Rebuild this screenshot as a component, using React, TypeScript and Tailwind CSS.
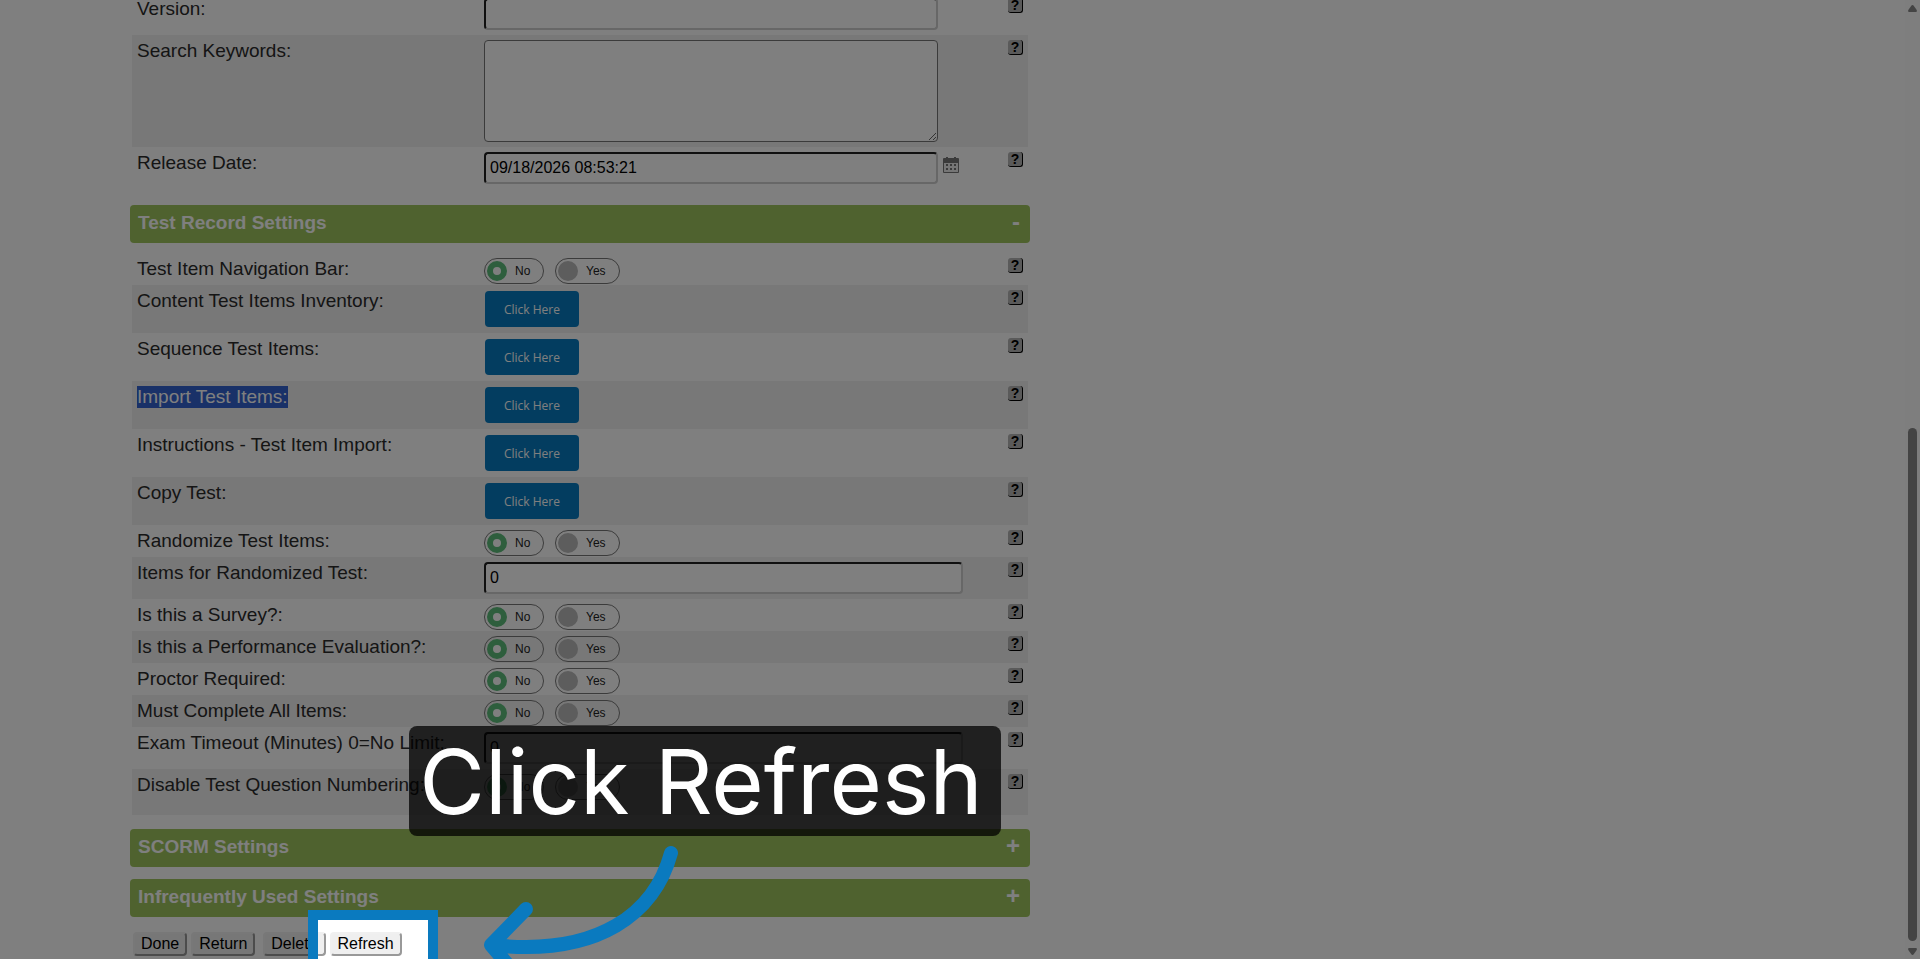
import type { ReactNode } from 'react';

const sans = "font-['Liberation_Sans',Arial,sans-serif]";

function Help({ topic }: { topic: string }) {
  return (
    <button
      type="button"
      aria-label={'Help: ' + topic}
      className="ml-auto flex h-[15px] w-[15px] shrink-0 items-center justify-center rounded-[3px] border-r border-b border-black bg-[#b4b4b4] text-sm leading-none font-bold text-black"
    >
      ?
    </button>
  );
}

type RowProps = {
  label: string;
  htmlFor?: string;
  striped?: boolean;
  selected?: boolean;
  tall?: boolean;
  children: ReactNode;
};

function Row({ label, htmlFor, striped, selected, tall, children }: RowProps) {
  return (
    <div className={'flex items-start px-[5px] pt-[5px] ' + (striped ? 'bg-[#f0f0f0] ' : '') + (tall ? 'pb-[14px]' : '')}>
      <div className="w-[347px] shrink-0 text-[19px] leading-[22px] text-[#2b2b2b]">
        <label htmlFor={htmlFor} className={selected ? 'inline-block bg-[#3263d0] text-white' : ''}>
          {label}
        </label>
      </div>
      {children}
      <Help topic={label} />
    </div>
  );
}

const field =
  'mb-[5px] block h-8 rounded-[4px] border-2 border-t-[#202020] border-l-[#202020] border-r-[#cfcfcf] border-b-[#cfcfcf] bg-white px-1 text-base text-black';

function Toggle({ name }: { name: string }) {
  return (
    <div className="mb-px flex gap-[11px]" role="radiogroup" aria-label={name}>
      <label className="flex h-[26px] w-[60px] items-center gap-2 rounded-full border border-[#777] pl-[2px] text-xs text-[#222]">
        <input
          type="radio"
          name={name}
          defaultChecked
          className="h-5 w-5 appearance-none rounded-full border-[6px] border-[#5cbc7a] bg-white"
        />
        No
      </label>
      <label className="flex h-[26px] w-[65px] items-center gap-2 rounded-full border border-[#777] pl-[2px] text-xs text-[#222]">
        <input type="radio" name={name} className="h-5 w-5 appearance-none rounded-full bg-[#bababa]" />
        Yes
      </label>
    </div>
  );
}

function ClickHere() {
  return (
    <button
      type="button"
      className="mt-px mb-[6px] ml-px h-9 w-[94px] rounded-[4px] bg-[#067ac0] pt-[2px] font-['Open_Sans',sans-serif] text-xs text-white"
    >
      Click Here
    </button>
  );
}

function SectionBar({ title, sign }: { title: string; sign: string }) {
  return (
    <button
      type="button"
      className="flex h-[38px] w-full items-center justify-between rounded-[4px] bg-[#9ec55e] pr-[10px] pb-[2px] pl-2 text-left text-[19px] font-bold text-white"
    >
      <span>{title}</span>
      <span className="pb-[2px] text-2xl leading-none">{sign}</span>
    </button>
  );
}

function ActionButton({ children }: { children: ReactNode }) {
  return (
    <button
      type="button"
      className="h-6 rounded-[4px] border-2 border-t-[#f0f0f0] border-l-[#f0f0f0] border-r-[#999] border-b-[#999] bg-[#efefef] px-[6px] text-base leading-5 text-black"
    >
      {children}
    </button>
  );
}

function CalendarIcon() {
  return (
    <svg width="16" height="16" viewBox="0 0 16 16" className="mt-[5px] ml-[5px] shrink-0" aria-label="Pick a date">
      <path fill="#777" d="M1 1h14a1 1 0 0 1 1 1v13a1 1 0 0 1-1 1H1a1 1 0 0 1-1-1V2a1 1 0 0 1 1-1z" />
      <path fill="#777" d="M3 0h2v3H3zM11 0h2v3h-2z" />
      <path fill="#ececec" d="M1 6h14v9H1z" />
      <path fill="#777" d="M3 7h2v2H3zM7 7h2v2H7zM11 7h2v2h-2zM3 11h2v2H3zM7 11h2v2H7zM11 11h2v2h-2z" />
    </svg>
  );
}

function ScrollBar() {
  return (
    <div className="flex w-[15px] shrink-0 flex-col items-center bg-[#fcfcfc] pt-[5px] pb-1" aria-hidden="true">
      <svg width="9" height="7" viewBox="0 0 9 7">
        <path fill="#888" d="M4.500 0q.7 0 1.200.7L8.700 5q.6 2-.7 2H1Q-.3 7 .3 5L3.300.7Q3.800 0 4.500 0z" />
      </svg>
      <div className="flex-1" />
      <div className="h-[54%] w-[9px] rounded-full bg-[#888]" />
      <svg width="9" height="7" viewBox="0 0 9 7" className="mt-[7px]">
        <path fill="#888" d="M4.500 7q.7 0 1.200-.7L8.700 2q.6-2-.7-2H1Q-.3 0 .3 2l3 4.300q.5.7 1.200.7z" />
      </svg>
    </div>
  );
}

export default function App() {
  return (
    <div className={'relative flex h-screen overflow-hidden bg-white ' + sans}>
      <main className="min-w-0 flex-1">
        <form className="-mt-[7px] ml-[130px] w-[900px]">
          <section className="px-[2px] pb-4">
            <Row label="Version:" htmlFor="version">
              <input id="version" type="text" className={field + ' w-[454px]'} />
            </Row>
            <Row label="Search Keywords:" htmlFor="keywords" striped>
              <textarea id="keywords" className="mb-[5px] block h-[102px] w-[454px] rounded-[4px] border border-[#777] bg-white" />
            </Row>
            <Row label="Release Date:" htmlFor="release">
              <input id="release" type="text" defaultValue="09/18/2026 08:53:21" className={field + ' w-[454px]'} />
              <CalendarIcon />
            </Row>
          </section>

          <SectionBar title="Test Record Settings" sign="-" />
          <section className="px-[2px] pt-[10px] pb-[14px]">
            <Row label="Test Item Navigation Bar:">
              <Toggle name="Test Item Navigation Bar" />
            </Row>
            <Row label="Content Test Items Inventory:" striped>
              <ClickHere />
            </Row>
            <Row label="Sequence Test Items:">
              <ClickHere />
            </Row>
            <Row label="Import Test Items:" striped selected>
              <ClickHere />
            </Row>
            <Row label="Instructions - Test Item Import:">
              <ClickHere />
            </Row>
            <Row label="Copy Test:" striped>
              <ClickHere />
            </Row>
            <Row label="Randomize Test Items:">
              <Toggle name="Randomize Test Items" />
            </Row>
            <Row label="Items for Randomized Test:" htmlFor="random-items" striped>
              <input id="random-items" type="text" defaultValue="0" className={field + ' w-[479px]'} />
            </Row>
            <Row label="Is this a Survey?:">
              <Toggle name="Is this a Survey?" />
            </Row>
            <Row label="Is this a Performance Evaluation?:" striped>
              <Toggle name="Is this a Performance Evaluation?" />
            </Row>
            <Row label="Proctor Required:">
              <Toggle name="Proctor Required" />
            </Row>
            <Row label="Must Complete All Items:" striped>
              <Toggle name="Must Complete All Items" />
            </Row>
            <Row label="Exam Timeout (Minutes) 0=No Limit:" htmlFor="timeout">
              <input id="timeout" type="text" defaultValue="0" className={field + ' w-[479px]'} />
            </Row>
            <Row label="Disable Test Question Numbering:" striped tall>
              <Toggle name="Disable Test Question Numbering" />
            </Row>
          </section>

          <div className="flex flex-col gap-3">
            <SectionBar title="SCORM Settings" sign="+" />
            <SectionBar title="Infrequently Used Settings" sign="+" />
          </div>

          <div className="flex gap-2 px-[3px] pt-[15px]">
            <div className="flex gap-1">
              <ActionButton>Done</ActionButton>
              <ActionButton>Return</ActionButton>
            </div>
            <div className="flex gap-1">
              <ActionButton>Delete</ActionButton>
              <ActionButton>Refresh</ActionButton>
            </div>
          </div>
        </form>
      </main>
      <ScrollBar />

      <div className="pointer-events-none absolute top-[910px] left-[308px] h-[70px] w-[130px] border-10 border-[#0a7abf] shadow-[0_0_0_2000px_rgba(0,0,0,0.5)]" />
      <div
        role="tooltip"
        className="absolute top-[726px] left-[409px] flex h-[110px] w-[592px] items-center justify-center rounded-lg bg-black/75 pt-[2px] pr-2 font-['Inter',sans-serif] text-[90px] leading-none whitespace-nowrap text-white"
      >
        Click Refresh
      </div>
      <svg className="pointer-events-none absolute top-[840px] left-[480px]" width="210" height="160" viewBox="480 840 210 160" aria-hidden="true">
        <path
          d="M671 853C655 912 600 957 492 945M526 909L491 945L526 986"
          fill="none"
          stroke="#0a7abf"
          strokeWidth="14"
          strokeLinecap="round"
          strokeLinejoin="round"
        />
      </svg>
    </div>
  );
}
